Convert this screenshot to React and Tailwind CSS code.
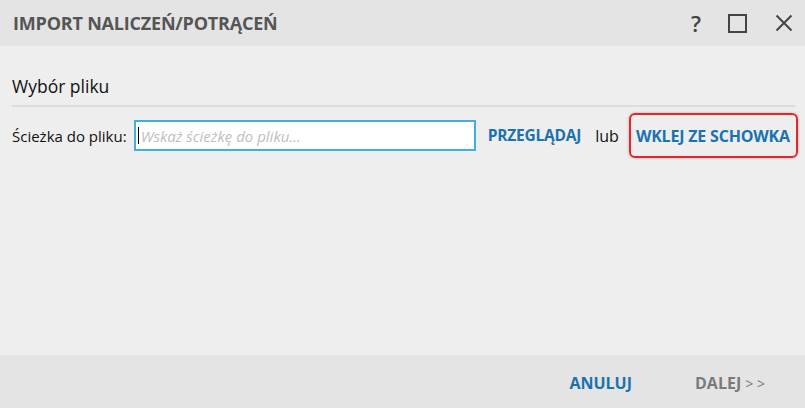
export default function App() {
  return (
    <div className="w-[805px] h-[408px] flex flex-col bg-[#eeeeee] font-['Open_Sans',sans-serif] text-[#111] whitespace-nowrap">
      {/* header */}
      <div className="h-[46px] shrink-0 bg-[#e4e4e4] flex items-center pl-[13px] pr-[12px]">
        <h1 className="text-[18px] font-bold text-[#555] tracking-[-0.2px]">IMPORT NALICZEŃ/POTRĄCEŃ</h1>
        <div className="ml-auto flex items-center">
          <span className="text-[22px] font-semibold text-[#444] leading-none mr-[27px]">?</span>
          <svg width="19" height="19" viewBox="0 0 19 19" className="mr-[28px]">
            <rect x="1" y="1" width="17" height="17" fill="none" stroke="#444" strokeWidth="2" />
          </svg>
          <svg width="18" height="18" viewBox="0 0 18 18">
            <path d="M1.5 1.5 L16.5 16.5 M16.5 1.5 L1.5 16.5" stroke="#444" strokeWidth="2" />
          </svg>
        </div>
      </div>

      {/* body */}
      <div className="flex-1 px-[12px] pt-[27px]">
        <div className="text-[17.5px] pb-[6px] border-b-2 border-[#dcdcdc] mr-[-2px]">Wybór pliku</div>
        <div className="flex items-center mt-[6px]">
          <span className="shrink-0 text-[15px]">Ścieżka do pliku:</span>
          <div className="shrink-0 ml-[7px] w-[342px] h-[31px] bg-white border-2 border-[#3fb0e6] flex items-center pl-[2px]">
            <span className="w-px h-[17px] bg-black mr-[2px]" />
            <span className="text-[15px] italic text-[#c0c0c0]">Wskaż ścieżkę do pliku...</span>
          </div>
          <span className="shrink-0 ml-[12px] text-[15.5px] font-bold text-[#1b72b0] tracking-[-0.2px]">PRZEGLĄDAJ</span>
          <span className="shrink-0 ml-[14px] text-[16px]">lub</span>
          <div className="shrink-0 ml-[10px] h-[45px] pl-[5px] pr-[6px] flex items-center border-2 border-[#e8242a] rounded-[6px] shadow-[0_0_3px_rgba(0,0,0,0.25)]">
            <span className="text-[16px] font-bold text-[#1b72b0] tracking-[-0.2px]">WKLEJ ZE SCHOWKA</span>
          </div>
        </div>
      </div>

      {/* footer */}
      <div className="h-[53px] shrink-0 bg-[#e4e4e4] flex items-center justify-end pr-[40px] pt-[2px]">
        <span className="text-[16px] font-bold text-[#1b72b0]">ANULUJ</span>
        <span className="ml-[63px] text-[16px] font-bold text-[#7a7a7a]">
          DALEJ <span className="font-normal text-[14px]">&gt; &gt;</span>
        </span>
      </div>
    </div>
  )
}
